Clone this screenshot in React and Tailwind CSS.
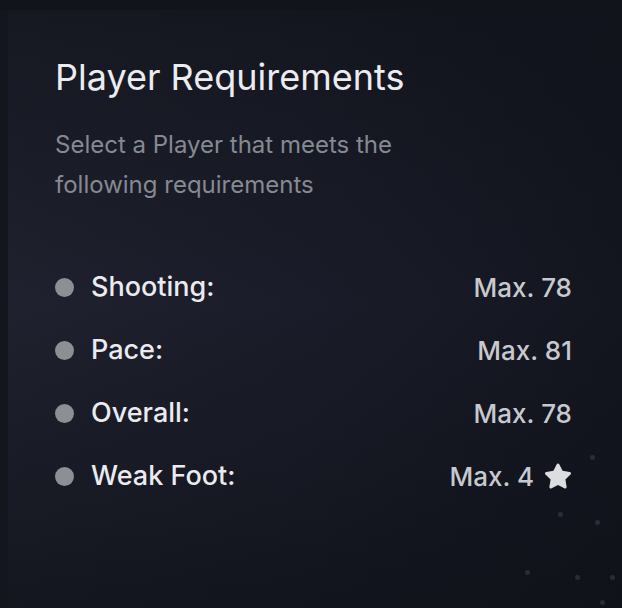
import { FaStar } from 'react-icons/fa';

const rows = [
  { label: 'Shooting:', value: 'Max. 78' },
  { label: 'Pace:', value: 'Max. 81' },
  { label: 'Overall:', value: 'Max. 78' },
  { label: 'Weak Foot:', value: 'Max. 4', star: true },
];

const dots = [
  [590, 455], [558, 512], [595, 520], [525, 570], [575, 575], [610, 575], [600, 600],
];

export default function App() {
  return (
    <div
      className="relative w-[622px] h-[608px] overflow-hidden bg-gradient-to-r from-[#1f222e] via-[#1a1d29] to-[#13161f]"
      style={{ fontFamily: 'Inter, "Noto Sans", sans-serif' }}
    >
      <div className="absolute inset-0 bg-gradient-to-b from-[#0f1118]/60 via-transparent to-[#0d0f15]/60 pointer-events-none" />
      <div className="absolute left-0 top-0 h-full w-[8px] bg-[#14161e] pointer-events-none" />
      <div className="absolute left-0 top-0 w-full h-[10px] bg-[#12141b] pointer-events-none" />
      {dots.map(([x, y], i) => (
        <span
          key={i}
          className="absolute w-[5px] h-[5px] rounded-full bg-[#3a3e4c]/60"
          style={{ left: x, top: y }}
        />
      ))}

      <div className="relative pl-[55px] pr-[50px] pt-[55px]">
        <h1 className="text-[36px] leading-[44px] text-[#ececf0]">
          Player Requirements
        </h1>
        <p className="mt-[26px] text-[24px] leading-[40px] text-[#868992] max-w-[370px]">
          Select a Player that meets the following requirements
        </p>

        <div className="mt-[63px] flex flex-col gap-[25px]">
          {rows.map((r) => (
            <div key={r.label} className="flex items-center justify-between h-[38px]">
              <div className="flex items-center gap-[17px]">
                <span className="w-[19px] h-[19px] rounded-full bg-[#8e8f94]" />
                <span className="text-[27px] font-medium text-[#ebebef]">{r.label}</span>
              </div>
              <div className="flex items-center gap-[10px] text-[26px] font-medium text-[#c7c9cf]">
                <span>{r.value}</span>
                {r.star && <FaStar className="w-[28px] h-[28px] text-[#dcdde1]" />}
              </div>
            </div>
          ))}
        </div>
      </div>
    </div>
  );
}
